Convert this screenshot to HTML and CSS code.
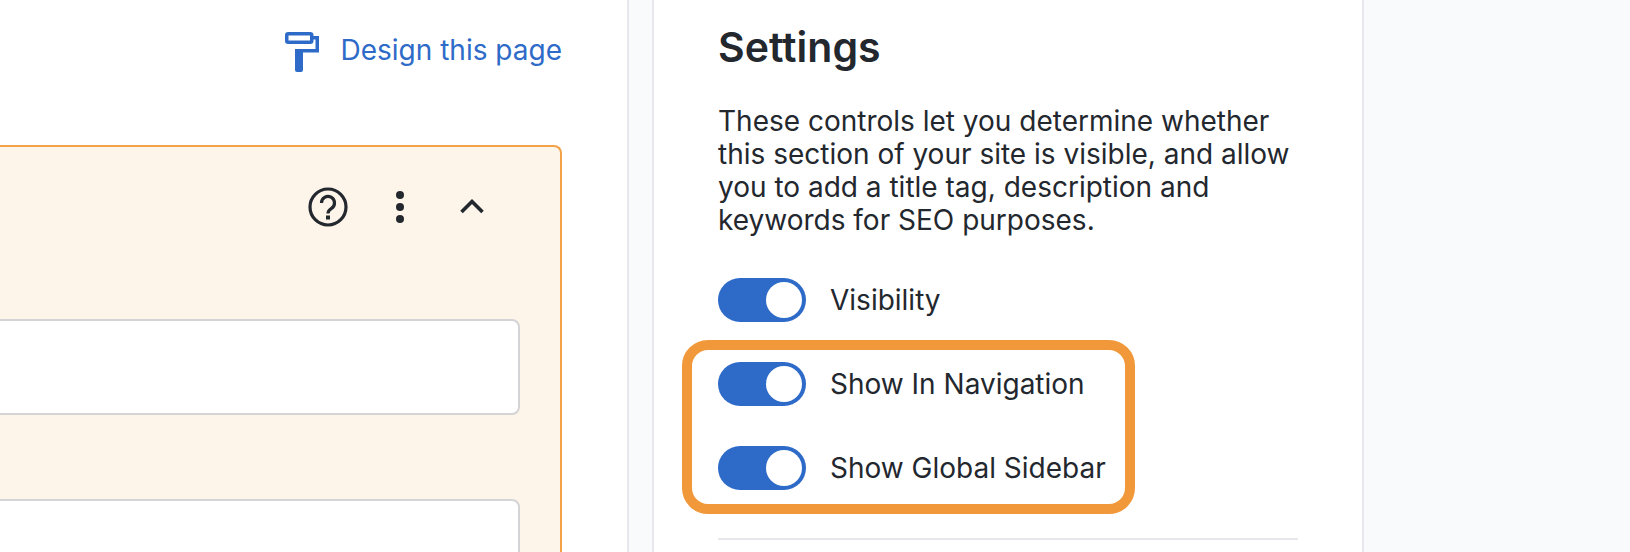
FILE: index.html
```html
<!DOCTYPE html>
<html lang="en">
<head>
    <meta charset="UTF-8">
    <meta name="viewport" content="width=device-width, initial-scale=1.0">
    <title>Settings</title>
    <link rel="stylesheet" href="styles.css">
</head>
<body>
    <div class="page">
        <div class="main">
            <div class="page-actions">
                <a class="design-link" href="#">
                    <svg class="roller-icon" width="34" height="40" viewBox="0 0 34 40" fill="none">
                        <rect x="1.75" y="1.75" width="25" height="8.5" rx="1.5" stroke="#2e6bc9" stroke-width="3.5"/>
                        <path d="M28 5.75h4.25v13H11" stroke="#2e6bc9" stroke-width="3.5"/>
                        <path d="M10 17h8v21a2 2 0 0 1-2 2h-4a2 2 0 0 1-2-2z" fill="#2e6bc9"/>
                    </svg>
                    <span>Design this page</span>
                </a>
            </div>
            <div class="card">
                <div class="card-head">
                    <svg width="40" height="40" viewBox="0 0 40 40" fill="none">
                        <circle cx="20" cy="20" r="18" stroke="#23272e" stroke-width="3.2"/>
                        <path d="M13.5 16a6.5 6.5 0 1 1 10 5.4c-2 1.3-3.5 2.4-3.5 5.1" stroke="#23272e" stroke-width="3.2"/>
                        <rect x="18" y="28.5" width="4" height="4" fill="#23272e"/>
                    </svg>
                    <svg width="12" height="40" viewBox="0 0 12 40" fill="#23272e">
                        <circle cx="6" cy="8" r="4"/>
                        <circle cx="6" cy="20" r="4"/>
                        <circle cx="6" cy="32" r="4"/>
                    </svg>
                    <svg width="40" height="40" viewBox="0 0 40 40" fill="none">
                        <path d="M9.5 25L20 14.5L30.5 25" stroke="#23272e" stroke-width="3.6"/>
                    </svg>
                </div>
                <div class="field"></div>
                <div class="field"></div>
            </div>
        </div>
        <div class="gutter"></div>
        <div class="settings">
            <h2>Settings</h2>
            <p>These controls let you determine whether this section of your site is visible, and allow you to add a title tag, description and keywords for SEO purposes.</p>
            <div class="toggle-row">
                <span class="toggle"><span class="knob"></span></span>
                <span>Visibility</span>
            </div>
            <div class="highlight">
                <div class="toggle-row">
                    <span class="toggle"><span class="knob"></span></span>
                    <span>Show In Navigation</span>
                </div>
                <div class="toggle-row">
                    <span class="toggle"><span class="knob"></span></span>
                    <span>Show Global Sidebar</span>
                </div>
            </div>
            <div class="divider"></div>
        </div>
    </div>
</body>
</html>
```

FILE: styles.css
```css
* {
    box-sizing: border-box;
}
html, body {
    margin: 0;
    height: 552px;
    overflow: hidden;
}
body {
    background: #f9fafc;
    font-family: Inter, "Liberation Sans", sans-serif;
    color: #23272e;
}
.page {
    display: flex;
    height: 552px;
    overflow: hidden;
}
.main {
    width: 629px;
    flex: none;
    background: #fff;
    border-right: 2px solid #e8e8ec;
    padding-right: 65px;
}
.page-actions {
    height: 145px;
    display: flex;
    justify-content: flex-end;
    padding-top: 32px;
}
.design-link {
    display: flex;
    align-items: flex-start;
    gap: 22px;
    height: 40px;
    color: #2e6bc9;
    text-decoration: none;
    font-size: 28px;
    line-height: 36px;
}
.card {
    margin-left: -10px;
    height: 407px;
    overflow: hidden;
    background: #fdf5ea;
    border: 2px solid #f4a247;
    border-bottom: 0;
    border-radius: 8px 8px 0 0;
    padding-right: 40px;
}
.card-head {
    display: flex;
    justify-content: flex-end;
    align-items: center;
    gap: 46px;
    height: 172px;
    padding: 0 28px 52px 0;
}
.field {
    height: 96px;
    margin-bottom: 84px;
    background: #fff;
    border: 2px solid #d4d4d6;
    border-radius: 8px;
}
.gutter {
    width: 23px;
    flex: none;
}
.settings {
    width: 712px;
    flex: none;
    background: #fff;
    border-left: 2px solid #e8e8ec;
    border-right: 2px solid #e8e8ec;
    padding: 24px 64px 0 64px;
}
h2 {
    margin: 0 0 35px;
    font-size: 41px;
    line-height: 46px;
    font-weight: 600;
}
p {
    margin: 0 0 41px;
    font-size: 28px;
    line-height: 33px;
}
.toggle-row {
    display: flex;
    align-items: center;
    gap: 24px;
    height: 44px;
    font-size: 28px;
}
.toggle {
    width: 88px;
    height: 44px;
    flex: none;
    display: flex;
    justify-content: flex-end;
    align-items: center;
    padding-right: 4px;
    background: #2e6bc9;
    border-radius: 22px;
}
.knob {
    width: 36px;
    height: 36px;
    background: #fff;
    border-radius: 50%;
}
.highlight {
    width: fit-content;
    margin: 18px 0 0 -36px;
    padding: 12px 19px 14px 26px;
    border: 10px solid #f0983a;
    border-radius: 26px;
    display: flex;
    flex-direction: column;
    gap: 40px;
}
.divider {
    height: 2px;
    margin-top: 24px;
    background: #e8e8ec;
}
```
